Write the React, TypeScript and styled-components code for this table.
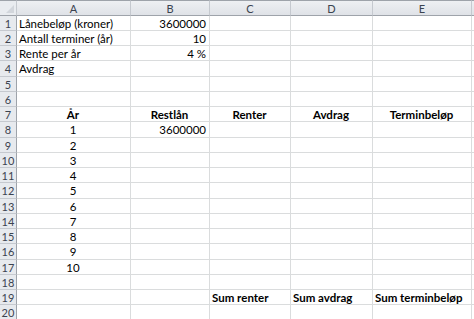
import React from "react";
import styled, { createGlobalStyle } from "styled-components";

const COLS = ["A", "B", "C", "D", "E", ""];
const WIDTHS = "17px 114px 79px 81px 82px 99px 1fr";

// Row heights at this zoom level are 15px with every fourth one a pixel taller
const ROW_HEIGHTS = ["16px", ...Array.from({ length: 20 }, (_, i) => (i % 4 === 3 ? "16px" : "15px"))].join(" ");

type CellData = { text?: string; align?: "left" | "right" | "center"; bold?: boolean };

const rows: CellData[][] = [
  [{ text: "Lånebeløp (kroner)" }, { text: "3600000", align: "right" }],
  [{ text: "Antall terminer (år)" }, { text: "10", align: "right" }],
  [{ text: "Rente per år" }, { text: "4 %", align: "right" }],
  [{ text: "Avdrag" }],
  [],
  [],
  [
    { text: "År", align: "center", bold: true },
    { text: "Restlån", align: "center", bold: true },
    { text: "Renter", align: "center", bold: true },
    { text: "Avdrag", align: "center", bold: true },
    { text: "Terminbeløp", align: "center", bold: true },
  ],
  [{ text: "1", align: "center" }, { text: "3600000", align: "right" }],
  ...Array.from({ length: 9 }, (_, i) => [{ text: String(i + 2), align: "center" as const }]),
  [],
  [
    {},
    {},
    { text: "Sum renter", bold: true },
    { text: "Sum avdrag", bold: true },
    { text: "Sum terminbeløp", bold: true },
  ],
  [],
];

const GlobalStyle = createGlobalStyle`
  html, body {
    margin: 0;
    padding: 0;
    background: #ffffff;
    overflow: hidden;
  }
`;

const Sheet = styled.div`
  display: grid;
  grid-template-columns: ${WIDTHS};
  grid-template-rows: ${ROW_HEIGHTS};
  width: 474px;
  height: 319px;
  overflow: hidden;
  font-family: Lato, "Liberation Sans", sans-serif;
  font-size: 11.5px;
  color: #000;
`;

const Corner = styled.div`
  position: relative;
  background: #e9ecf0;
  border-top: 1px solid #9ea3aa;
  border-bottom: 1px solid #9ea3aa;
  border-right: 1px solid #c5c9cf;
  box-sizing: border-box;

  &::after {
    content: "";
    position: absolute;
    right: 2px;
    bottom: 2px;
    border-left: 8px solid transparent;
    border-bottom: 8px solid #d2d6dc;
  }
`;

const ColHead = styled.div`
  display: flex;
  align-items: center;
  justify-content: center;
  background: linear-gradient(#eef0f3, #dfe2e7);
  border-top: 1px solid #9ea3aa;
  border-bottom: 1px solid #9ea3aa;
  border-right: 1px solid #c5c9cf;
  box-sizing: border-box;
  color: #3b4350;
  font-size: 11px;
`;

const RowHead = styled.div`
  display: flex;
  align-items: center;
  justify-content: center;
  background: #e7eaee;
  border-bottom: 1px solid #c5c9cf;
  border-right: 1px solid #9ea3aa;
  box-sizing: border-box;
  color: #3b4350;
  font-size: 11px;
`;

const Cell = styled.div<{ $align: string; $bold: boolean }>`
  display: flex;
  align-items: center;
  justify-content: ${(p) =>
    p.$align === "right" ? "flex-end" : p.$align === "center" ? "center" : "flex-start"};
  padding: 0 3px 0 2px;
  border-right: 1px solid #dadcdd;
  border-bottom: 1px solid #dadcdd;
  box-sizing: border-box;
  white-space: nowrap;
  overflow: visible;
  font-weight: ${(p) => (p.$bold ? 700 : 400)};
`;

const App: React.FC = () => {
  return (
    <>
      <GlobalStyle />
      <Sheet>
        <Corner />
        {COLS.map((c, i) => (
          <ColHead key={i}>{c}</ColHead>
        ))}
        {rows.map((row, r) => (
          <React.Fragment key={r}>
            <RowHead>{r + 1}</RowHead>
            {COLS.map((_, c) => {
              const cell = row[c] || {};
              return (
                <Cell key={c} $align={cell.align || "left"} $bold={!!cell.bold}>
                  {cell.text}
                </Cell>
              );
            })}
          </React.Fragment>
        ))}
      </Sheet>
    </>
  );
};

export default App;
